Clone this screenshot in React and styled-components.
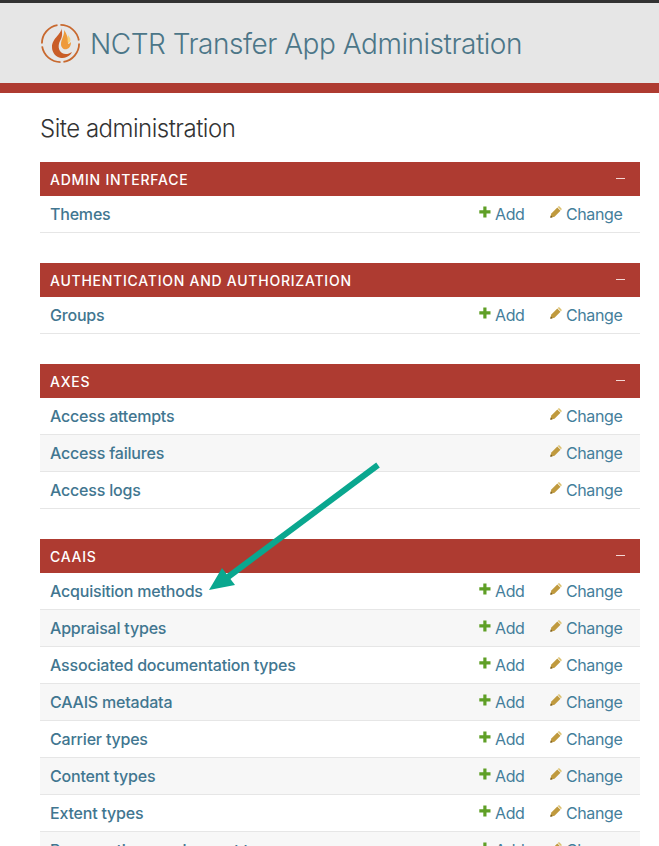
import React from "react";
import styled, { createGlobalStyle } from "styled-components";

const Global = createGlobalStyle`
  html, body { margin: 0; padding: 0; background: #fff; height: 846px; overflow: hidden; }
  body { font-family: Inter, "Liberation Sans", sans-serif; color: #333; }
`;

const TopEdge = styled.div`
  height: 3px;
  background: #333;
`;
const Header = styled.header`
  height: 80px;
  background: #e6e6e6;
  display: flex;
  align-items: center;
  gap: 9px;
  padding: 0 40px;
  box-sizing: border-box;
`;
const Brand = styled.h1`
  margin: 0;
  padding-top: 2px;
  font-size: 28px;
  font-weight: 300;
  letter-spacing: -0.47px;
  color: #4c7688;
  white-space: nowrap;
`;
const Stripe = styled.div`
  height: 10px;
  background: #ae3b31;
`;
const Main = styled.main`
  padding: 20px 19px 0 40px;
`;
const Title = styled.h2`
  margin: 0 0 17px;
  font-size: 24px;
  line-height: 32px;
  font-weight: 300;
  letter-spacing: -0.5px;
  color: #333;
`;
const Section = styled.section`
  margin-bottom: 30px;
`;
const Caption = styled.div`
  height: 34px;
  background: #ae3b31;
  color: #fff;
  display: flex;
  align-items: center;
  justify-content: space-between;
  padding: 0 15px 0 10px;
  font-size: 14px;
  letter-spacing: 0.75px;
  font-weight: 500;
`;
const Collapse = styled.span`
  width: 9px;
  height: 1px;
  background: #f3d8d5;
  margin-top: -2px;
`;
const Row = styled.div`
  height: 37px;
  box-sizing: border-box;
  border-bottom: 1px solid #e6e6e6;
  display: grid;
  grid-template-columns: 1fr 71px 72px;
  align-items: center;
  padding: 0 18px 0 10px;
  background: ${(p) => (p.$alt ? "#f7f7f7" : "#fff")};
  font-size: 16px;
  color: #447e9b;
`;
const Name = styled.span`
  font-weight: 500;
  letter-spacing: -0.2px;
  color: #417690;
  white-space: nowrap;
`;
const Action = styled.span`
  display: flex;
  align-items: center;
  gap: 4px;
  letter-spacing: -0.4px;
  color: #447e9b;
`;
const Glyph = styled.svg`
  width: 12px;
  height: 12px;
  flex: none;
  margin-top: -5px;
`;
const Arrow = styled.svg`
  position: absolute;
  left: 200px;
  top: 455px;
  width: 190px;
  height: 145px;
`;

const Plus = () => (
  <Glyph viewBox="0 0 12 12">
    <path d="M4.3 0.5h3.2v3.8h4v3.2h-4v4H4.3v-4H0.3V4.3h4z" fill="#5f9f26" />
  </Glyph>
);
const Pencil = () => (
  <Glyph viewBox="0 0 12 12">
    <path d="M0.3 11.7l1-4.2L7.3 1.5l3.2 3.2-6 6z" fill="#c09a3e" />
    <path d="M8.2 0.6a1 1 0 0 1 1.4 0l1.8 1.8a1 1 0 0 1 0 1.4l-.4.4-3.2-3.2z" fill="#dcc06c" />
    <path d="M0.3 11.7l.5-2.2 1.7 1.7z" fill="#6e5520" />
  </Glyph>
);

const data = [
  ["Admin Interface", [["Themes", true]]],
  ["Authentication and Authorization", [["Groups", true]]],
  ["Axes", [["Access attempts"], ["Access failures"], ["Access logs"]]],
  ["CAAIS", [
    ["Acquisition methods", true],
    ["Appraisal types", true],
    ["Associated documentation types", true],
    ["CAAIS metadata", true],
    ["Carrier types", true],
    ["Content types", true],
    ["Extent types", true],
    ["Preservation requirement types", true],
  ]],
];

export default function App() {
  return (
    <>
      <Global />
      <TopEdge />
      <Header>
        <svg width="41" height="41" viewBox="0 0 41 41">
          <circle cx="20.5" cy="20.5" r="18.6" fill="none" stroke="#c8692f" strokeWidth="1.8" strokeDasharray="26 3" />
          <path d="M21 5c2 5-9 10-9 19 0 6 4 10 9 11 5 0 9-2 11-6-3 2-7 3-10 1-4-3-4-8-2-12 2-3 3-8 1-13z" fill="#c95d27" />
          <path d="M24 7c1 5-3 9-3 14 0 4 3 6 6 5 3-1 4-4 4-7-1 1-2 2-3 2 1-4-1-10-4-14z" fill="#ee9a3a" />
          <path d="M28 12c0 3-1 5 0 8 2 0 3-3 2-5z" fill="#f7d27a" />
        </svg>
        <Brand>NCTR Transfer App Administration</Brand>
      </Header>
      <Stripe />
      <Main>
        <Title>Site administration</Title>
        {data.map(([label, rows]) => (
          <Section key={label}>
            <Caption>
              <span>{label.toUpperCase()}</span>
              <Collapse />
            </Caption>
            {rows.map(([name, add], i) => (
              <Row key={name} $alt={i % 2 === 1}>
                <Name>{name}</Name>
                {add ? <Action><Plus />Add</Action> : <span />}
                <Action><Pencil />Change</Action>
              </Row>
            ))}
          </Section>
        ))}
      </Main>
      <Arrow viewBox="0 0 190 145">
        <path d="M178 10L28 122" stroke="#0aa78f" strokeWidth="6" fill="none" />
        <path d="M9 135L22 113L35 130z" fill="#0aa78f" />
      </Arrow>
    </>
  );
}
